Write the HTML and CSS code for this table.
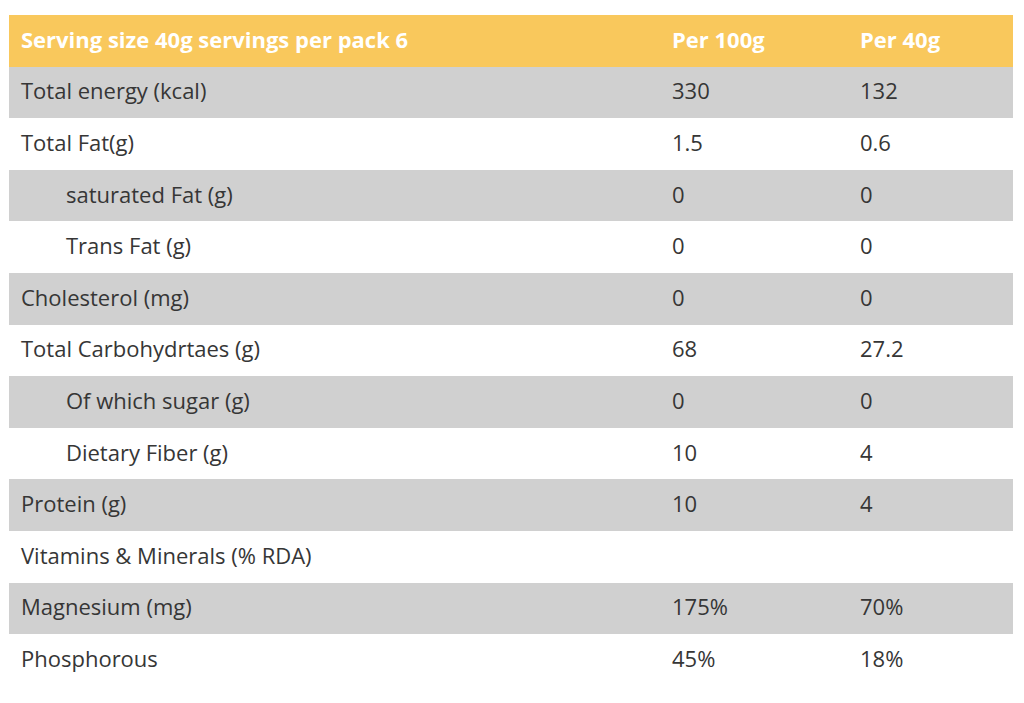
FILE: index.html
```html
<!DOCTYPE html>
<html lang="en">
<head>
<meta charset="utf-8">
<title>Nutrition facts</title>
<link rel="stylesheet" href="styles.css">
</head>
<body>
<div class="wrap">
<table class="nutri">
  <thead>
    <tr><th class="c1">Serving size 40g servings per pack 6</th><th class="c2">Per 100g</th><th class="c3">Per 40g</th></tr>
  </thead>
  <tbody>
    <tr class="alt"><td>Total energy (kcal)</td><td>330</td><td>132</td></tr>
    <tr><td>Total Fat(g)</td><td>1.5</td><td>0.6</td></tr>
    <tr class="alt"><td class="sub">saturated Fat (g)</td><td>0</td><td>0</td></tr>
    <tr><td class="sub">Trans Fat (g)</td><td>0</td><td>0</td></tr>
    <tr class="alt"><td>Cholesterol (mg)</td><td>0</td><td>0</td></tr>
    <tr><td>Total Carbohydrtaes (g)</td><td>68</td><td>27.2</td></tr>
    <tr class="alt"><td class="sub">Of which sugar (g)</td><td>0</td><td>0</td></tr>
    <tr><td class="sub">Dietary Fiber (g)</td><td>10</td><td>4</td></tr>
    <tr class="alt"><td>Protein (g)</td><td>10</td><td>4</td></tr>
    <tr><td>Vitamins &amp; Minerals (% RDA)</td><td></td><td></td></tr>
    <tr class="alt"><td>Magnesium (mg)</td><td>175%</td><td>70%</td></tr>
    <tr><td>Phosphorous</td><td>45%</td><td>18%</td></tr>
  </tbody>
</table>
</div>
</body>
</html>
```
FILE: styles.css
```css
html, body { margin: 0; padding: 0; background: #fff; }
.wrap { padding: 15px 11px 0 9px; }
.nutri {
  width: 1004px;
  border-collapse: collapse;
  font-family: "Open Sans", Lato, sans-serif;
  font-size: 22px;
  color: #363636;
}
.nutri th, .nutri td {
  height: 51.6px;
  padding: 0 12px 4px;
  box-sizing: border-box;
  text-align: left;
  vertical-align: middle;
  font-weight: 500;
}
.nutri thead th {
  background: #f9c85c;
  color: #fff;
  font-weight: 700;
}
.c1 { width: 651px; }
.c2 { width: 188px; }
.nutri tr.alt td { background: #d0d0d0; }
.nutri td.sub { padding-left: 57px; }
```
